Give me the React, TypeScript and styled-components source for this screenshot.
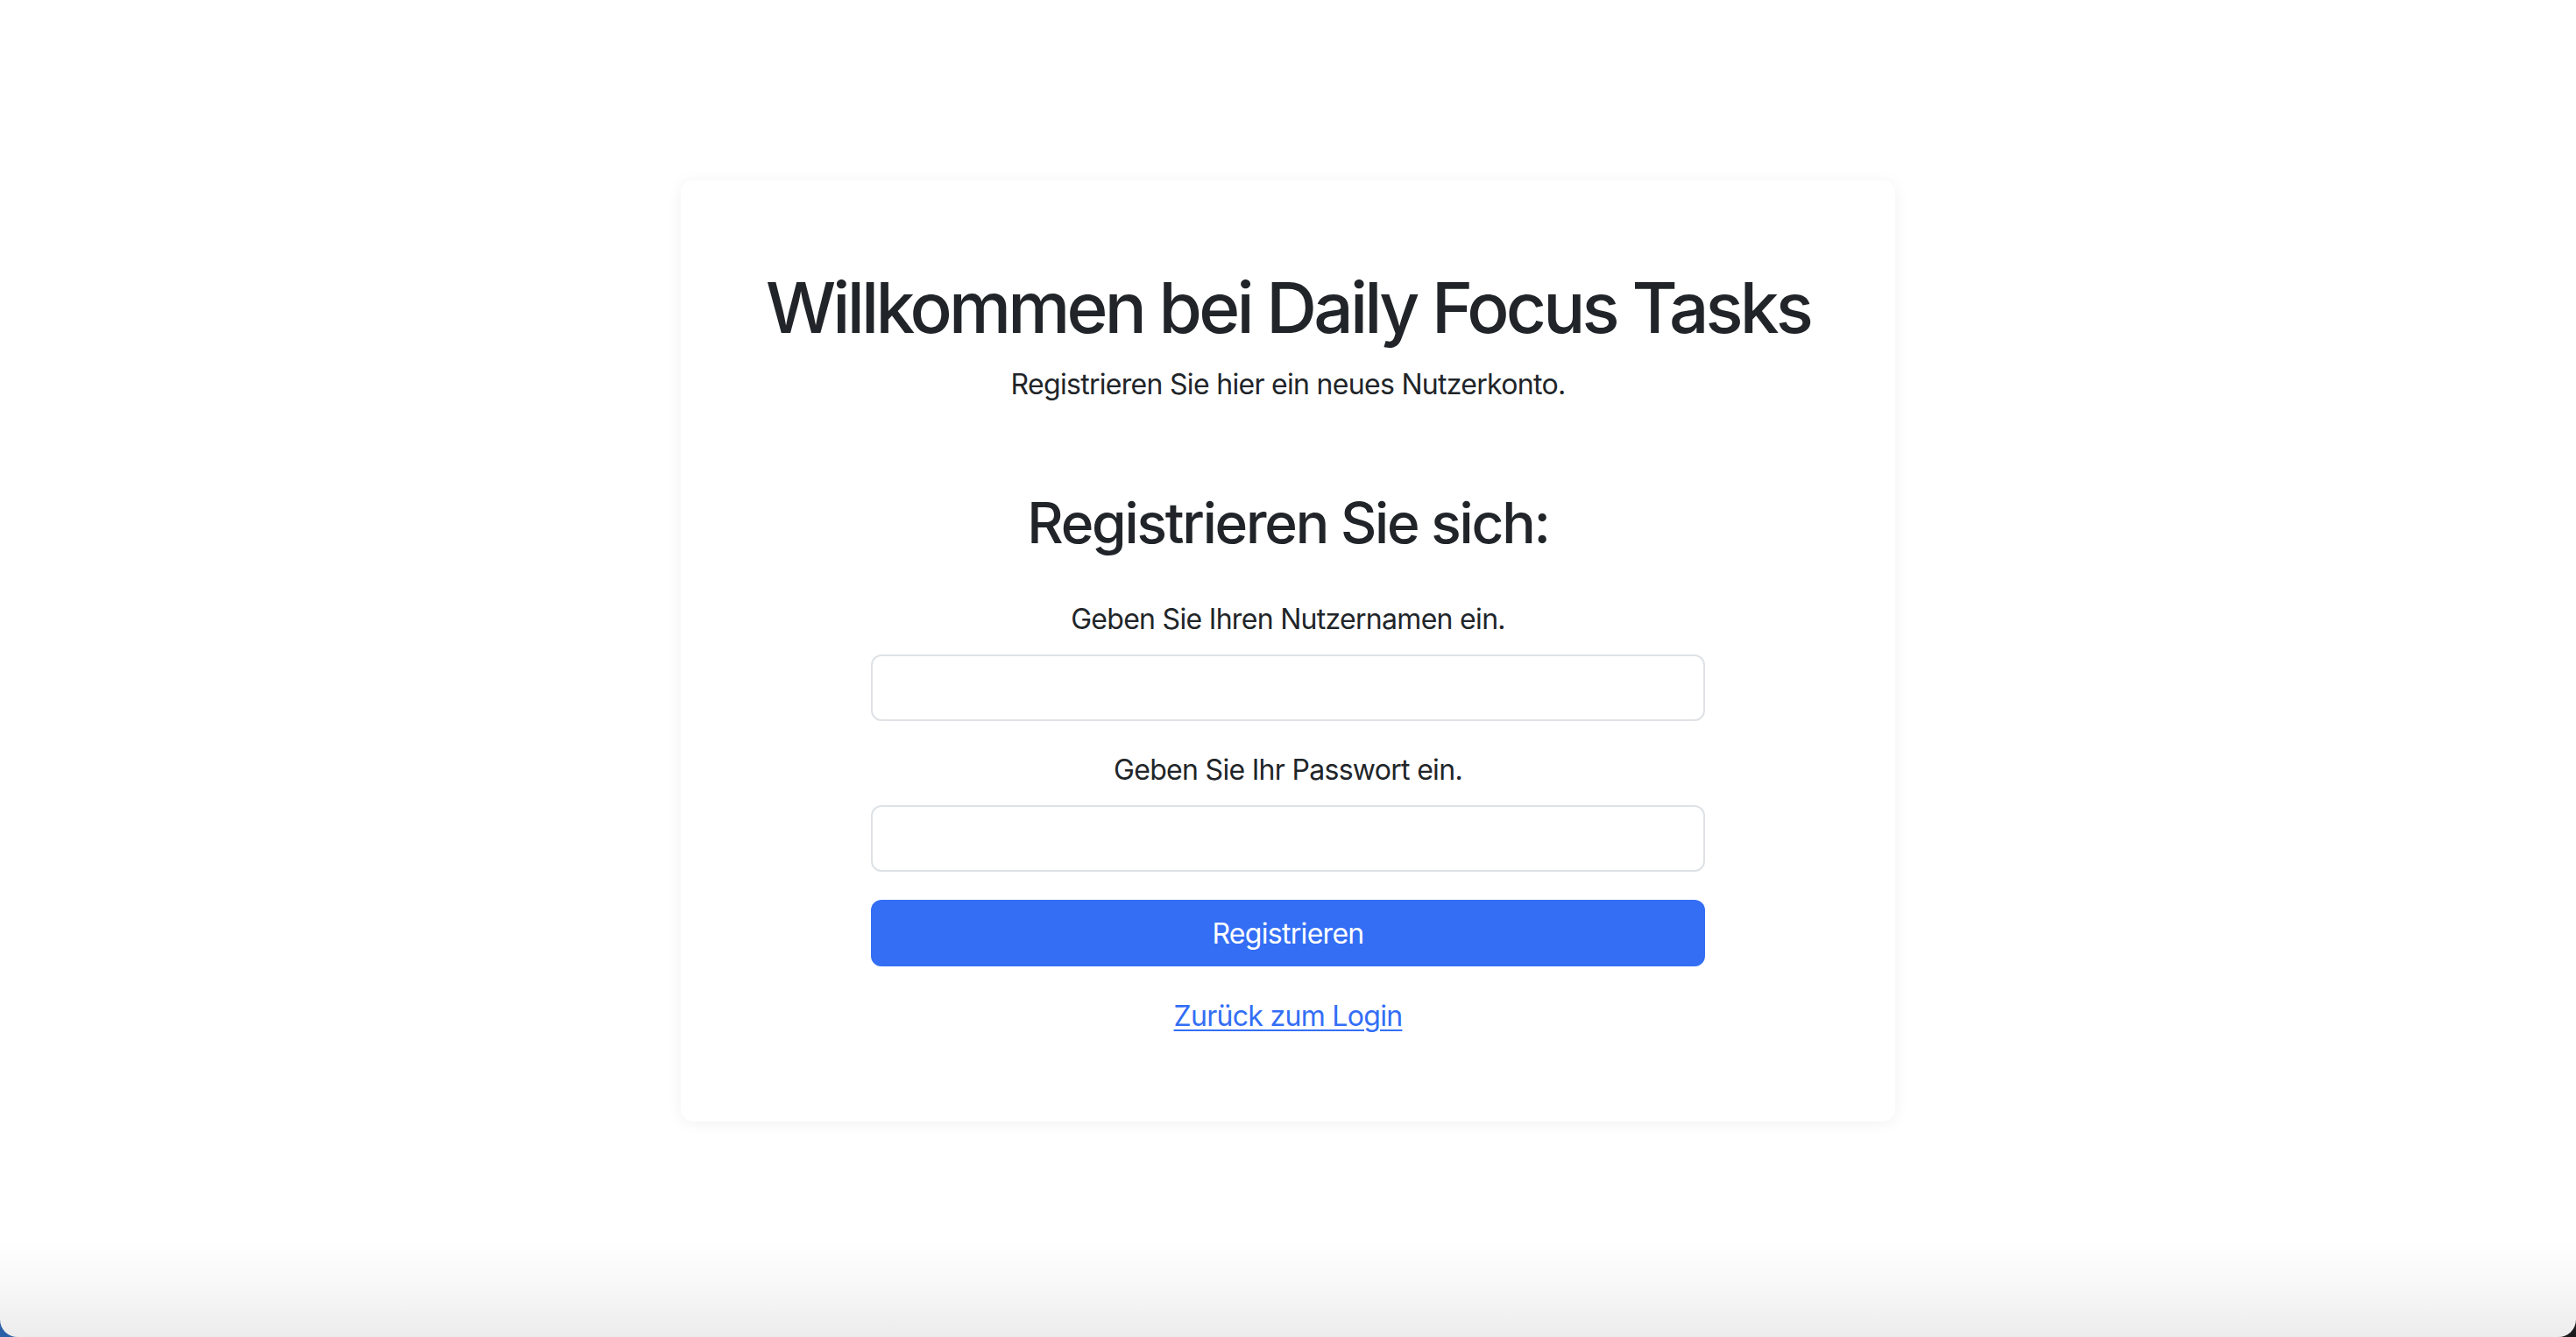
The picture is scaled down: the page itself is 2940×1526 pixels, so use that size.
import styled, { createGlobalStyle } from "styled-components";

const GlobalStyle = createGlobalStyle`
  html {
    background: linear-gradient(to right, #2b5fa6 0%, #2b5fa6 50%, #1b1b1d 50%, #1b1b1d 100%);
  }
  body {
    margin: 0;
    font-family: Inter, "Noto Sans", "Liberation Sans", sans-serif;
    color: #212529;
  }
  * {
    box-sizing: border-box;
  }
`;

const Page = styled.main`
  height: 1526px;
  display: flex;
  flex-direction: column;
  align-items: center;
  padding-top: 206px;
  background: linear-gradient(
    to bottom,
    #ffffff 0%,
    #ffffff calc(100% - 110px),
    #f7f7f7 calc(100% - 55px),
    #ececec 100%
  );
  border-bottom-left-radius: 20px;
  border-bottom-right-radius: 20px;
`;

const Card = styled.section`
  width: 1386px;
  padding: 94px 0 96px;
  background: #fff;
  border-radius: 14px;
  box-shadow: 0 2px 18px rgba(0, 0, 0, 0.06);
  display: flex;
  flex-direction: column;
  align-items: center;
  text-align: center;
`;

const Title = styled.h1`
  margin: 3px 0 16px;
  font-size: 80px;
  font-weight: 500;
  line-height: 1.2;
  letter-spacing: -3.8px;
`;

const Lead = styled.p`
  margin: 0;
  font-size: 32px;
  line-height: 1.5;
  letter-spacing: -0.7px;
`;

const Form = styled.form`
  width: 952px;
  margin-top: 96px;
  display: flex;
  flex-direction: column;
  align-items: center;
`;

const Heading = styled.h2`
  margin: 0 0 47px;
  font-size: 64px;
  font-weight: 500;
  line-height: 1.2;
  letter-spacing: -2.2px;
`;

const Label = styled.label`
  display: block;
  margin-bottom: 16px;
  font-size: 32px;
  line-height: 1.5;
  letter-spacing: -0.7px;
`;

const Input = styled.input`
  width: 100%;
  height: 76px;
  margin-bottom: 32px;
  padding: 12px 24px;
  border: 2px solid #dee2e6;
  border-radius: 12px;
  font-family: inherit;
  font-size: 32px;
  background: #fff;
  appearance: none;
`;

const Button = styled.button`
  width: 100%;
  height: 76px;
  border: none;
  border-radius: 12px;
  background: #336ef5;
  color: #fff;
  font-family: inherit;
  font-size: 32px;
  letter-spacing: -0.7px;
  padding-top: 2px;
  cursor: pointer;
`;

const BackLink = styled.a`
  margin-top: 33px;
  font-size: 32px;
  line-height: 1.5;
  letter-spacing: -0.7px;
  color: #336ef5;
  text-decoration: underline;
  text-underline-offset: 4px;
  text-decoration-thickness: 2px;
`;

const App = () => {
  return (
    <>
      <GlobalStyle />
      <Page>
        <Card>
          <Title>Willkommen bei Daily Focus Tasks</Title>
          <Lead>Registrieren Sie hier ein neues Nutzerkonto.</Lead>
          <Form onSubmit={(e) => e.preventDefault()}>
            <Heading>Registrieren Sie sich:</Heading>
            <Label htmlFor="username">Geben Sie Ihren Nutzernamen ein.</Label>
            <Input id="username" name="username" type="text" />
            <Label htmlFor="password">Geben Sie Ihr Passwort ein.</Label>
            <Input id="password" name="password" type="password" />
            <Button type="submit">Registrieren</Button>
            <BackLink href="#">Zurück zum Login</BackLink>
          </Form>
        </Card>
      </Page>
    </>
  );
};

export default App;
